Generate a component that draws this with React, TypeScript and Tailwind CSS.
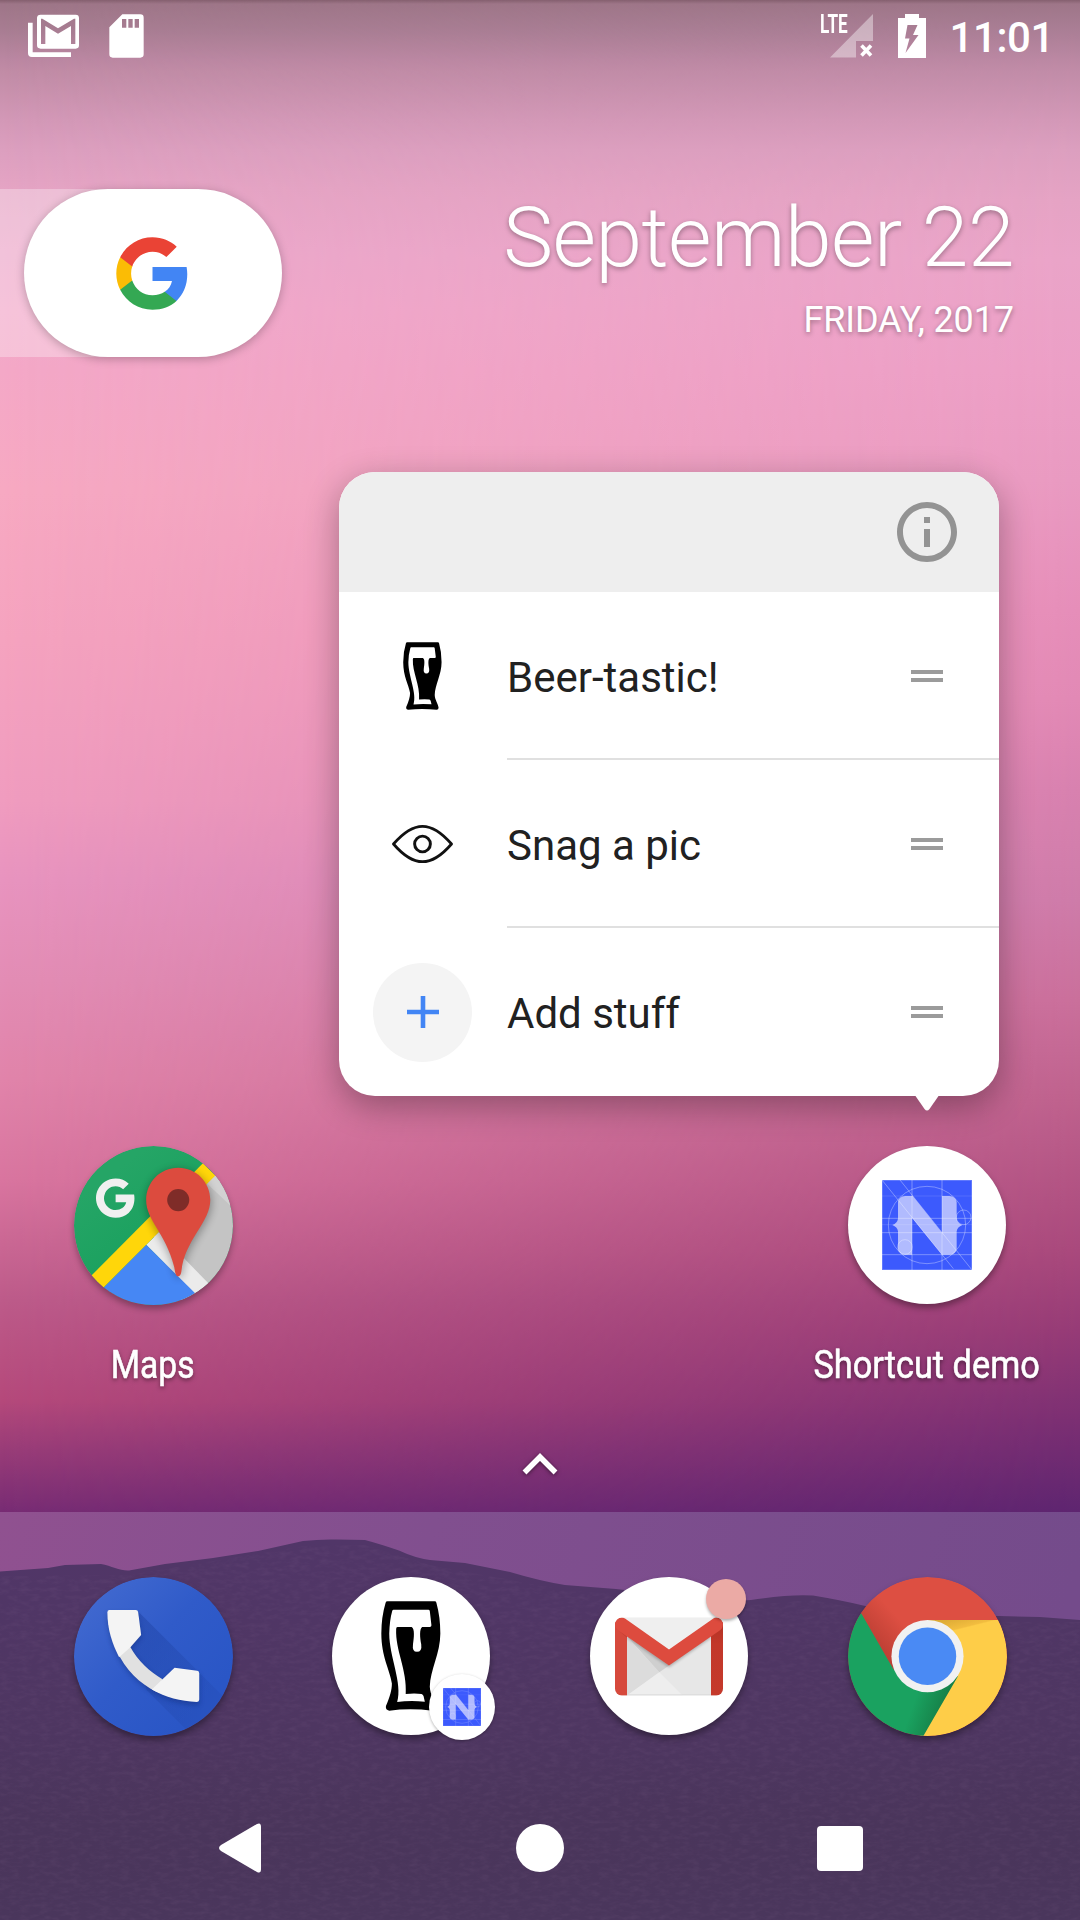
import type { ReactNode } from "react";

type Stop = [number, string];

const LEFT_STOPS: Stop[] = [
  [0, "#85606f"], [4, "#9e7688"], [30, "#a87d92"], [60, "#bb87a2"], [72, "#c18ca6"], [120, "#d398b7"],
  [150, "#dc9fbf"], [189, "#e5a4c4"], [250, "#eca8ca"], [310, "#f2a9ca"], [370, "#f4a8c7"], [490, "#f7a9c2"],
  [640, "#f5a3bf"], [800, "#f09cbf"], [880, "#e894bf"], [980, "#e38db5"], [1080, "#e184aa"],
  [1180, "#d9759f"], [1300, "#bd5b8a"], [1400, "#b5497b"], [1450, "#993c78"], [1512, "#782c74"],
];

const RIGHT_STOPS: Stop[] = [
  [0, "#85606f"], [4, "#9e7688"], [30, "#aa7e95"], [60, "#bb88a3"], [72, "#c18ca8"], [120, "#d398b7"],
  [150, "#dc9fbf"], [200, "#e5a3c4"], [260, "#eaa4c8"], [370, "#ec9fc6"], [480, "#e99ac1"],
  [610, "#e68eb9"], [700, "#e289b5"], [790, "#d881af"], [900, "#ce7ba9"], [1000, "#ca6f9b"],
  [1100, "#be618d"], [1250, "#a9497c"], [1330, "#963b76"], [1420, "#7b2f73"], [1512, "#5e2570"],
];

function Stops({ items }: { items: Stop[] }) {
  return (
    <>
      {items.map(([y, c]) => (
        <stop key={y} offset={y / 1512} stopColor={c} />
      ))}
    </>
  );
}

function Wallpaper() {
  return (
    <svg className="absolute inset-0 h-full w-full" viewBox="0 0 1080 1920" aria-hidden="true">
      <defs>
        <linearGradient id="skyL" x1="0" y1="0" x2="0" y2="1"><Stops items={LEFT_STOPS} /></linearGradient>
        <linearGradient id="skyR" x1="0" y1="0" x2="0" y2="1"><Stops items={RIGHT_STOPS} /></linearGradient>
        <linearGradient id="fade" x1="0" y1="0" x2="1" y2="0">
          <stop offset="0" stopColor="#000" />
          <stop offset="1" stopColor="#fff" />
        </linearGradient>
        <mask id="fadeMask"><rect width="1080" height="1512" fill="url(#fade)" /></mask>
        <linearGradient id="dusk" x1="0" y1="0" x2="1" y2="0.12">
          <stop offset="0" stopColor="#905190" />
          <stop offset="0.4" stopColor="#814f8f" />
          <stop offset="1" stopColor="#744b8b" />
        </linearGradient>
        <linearGradient id="hill" x1="0" y1="0" x2="0" y2="1">
          <stop offset="0" stopColor="#513668" />
          <stop offset="0.5" stopColor="#4e3661" />
          <stop offset="0.75" stopColor="#4a355b" />
          <stop offset="1" stopColor="#4a365c" />
        </linearGradient>
        <filter id="grain" x="0" y="0" width="1" height="1">
          <feTurbulence type="fractalNoise" baseFrequency="0.1 0.25" numOctaves="3" seed="4" />
          <feColorMatrix values="0 0 0 0 0.5  0 0 0 0 0.3  0 0 0 0 0.5  0.9 0 0 0 -0.36" />
          <feComposite in2="SourceGraphic" operator="in" />
        </filter>
      </defs>
      <rect width="1080" height="1512" fill="url(#skyL)" />
      <rect width="1080" height="1512" fill="url(#skyR)" mask="url(#fadeMask)" />
      <rect y="1512" width="1080" height="408" fill="url(#dusk)" />
      <path fill="url(#hill)" d="M0 1571.5L48 1568L65 1565L101 1564C112 1566 120 1571 129 1570.5L165 1564L213 1558L258 1551L303 1541Q320 1539 337 1539.5L365 1540Q380 1544 399 1550.5Q415 1558 430 1560L465 1563L510 1572Q540 1581 565 1585L616 1589Q660 1594 700 1598Q728 1602 751 1600Q790 1594 813 1595.5Q840 1600 861 1605Q900 1615 930 1617L999 1616L1040 1617L1080 1620V1920H0Z" />
      <path filter="url(#grain)" opacity="0.16" d="M0 1576L129 1575L303 1546L365 1545L430 1565L565 1590L751 1605L813 1600L930 1622H1080V1920H0Z" />
    </svg>
  );
}

const G_BLUE = "M22.56 12.25c0-.78-.07-1.53-.2-2.25H12v4.26h5.92c-.26 1.37-1.04 2.53-2.21 3.31v2.77h3.57c2.08-1.92 3.28-4.74 3.28-8.09z";
const G_GREEN = "M12 23c2.97 0 5.46-.98 7.28-2.66l-3.57-2.77c-.98.66-2.23 1.06-3.71 1.06-2.86 0-5.29-1.93-6.16-4.53H2.18v2.84C3.99 20.53 7.7 23 12 23z";
const G_YELLOW = "M5.84 14.09c-.22-.66-.35-1.36-.35-2.09s.13-1.43.35-2.09V7.07H2.18C1.43 8.55 1 10.22 1 12s.43 3.45 1.18 4.93l2.85-2.22.81-.62z";
const G_RED = "M12 5.38c1.62 0 3.06.56 4.21 1.64l3.15-3.15C17.45 2.09 14.97 1 12 1 7.7 1 3.99 3.47 2.18 7.07l3.66 2.84c.87-2.6 3.3-4.53 6.16-4.53z";

function GoogleLogo() {
  return (
    <svg className="mr-[2px] h-[79px] w-[79px]" viewBox="0 0 24 24">
      <path fill="#4285f4" d={G_BLUE} />
      <path fill="#34a853" d={G_GREEN} />
      <path fill="#fbbc05" d={G_YELLOW} />
      <path fill="#ea4335" d={G_RED} />
    </svg>
  );
}

function BeerGlass({ className }: { className: string }) {
  return (
    <svg className={className} viewBox="213 152 182 331" preserveAspectRatio="none">
      <path d="M233 153H376Q380 153 381 157Q393 200 393 250C393 310 362 360 361 410C362 435 378 455 379 472Q379 482 370 482Q300 474 238 482Q226 480 228 468C240 440 246 420 246 400C240 360 214 320 214 250Q214 200 227 157Q228 153 233 153Z" />
      <path fill="#fff" d="M251 178H357Q360 178 361 182L366 225Q366 230 361 230H338C329 236 331 262 335 282Q338 305 322 305Q307 305 310 282C313 262 316 236 306 230H263Q259 230 259 236C256 300 293 360 288 432Q315 429 336 432Q340 433 342 438L346 455Q300 451 262 456C279 400 238 320 238 250Q239 210 247 182Q248 178 251 178Z" />
    </svg>
  );
}

function NativeScriptMark({ className }: { className: string }) {
  return (
    <svg className={className} viewBox="276 180 270 270">
      <rect x="276" y="180" width="270" height="270" fill="#3c5afd" />
      <path fill="#b1bbfe" d="M324 246Q326 230 346 228H368L456 338V228H478Q497 230 500 246V296Q502 309 517 315Q502 321 500 334V386Q498 402 480 404H456L366 293V404H346Q326 402 324 386V334Q322 321 307 315Q322 309 324 296Z" />
      <g fill="none" stroke="#fff" strokeOpacity="0.4" strokeWidth="2.5">
        <path d="M366 180V450M456 180V450M276 295H546M276 338H546M276 404H546M276 180L490 446M330 180L546 450" />
        <path strokeOpacity="0.15" d="M276 228H546M276 314H546" />
        <circle cx="411" cy="315" r="116" />
        <circle cx="345" cy="381" r="22" />
        <circle cx="521" cy="292" r="22" />
        <rect x="277" y="181" width="268" height="268" strokeOpacity="0.25" />
      </g>
    </svg>
  );
}

function MapsIcon() {
  return (
    <svg className="h-[159px] w-[159px] rounded-full shadow-[0_4px_6px_rgba(0,0,0,0.3)]" viewBox="72 78 476 476">
      <defs>
        <clipPath id="mapClip"><circle cx="310" cy="316" r="238" /></clipPath>
        <filter id="pinBlur" x="-30%" y="-30%" width="160%" height="160%"><feGaussianBlur stdDeviation="12" /></filter>
        <linearGradient id="mapGreen" x1="0.2" y1="0.2" x2="0.5" y2="0.6">
          <stop offset="0" stopColor="#25a566" /><stop offset="1" stopColor="#1ba15f" />
        </linearGradient>
      </defs>
      <g clipPath="url(#mapClip)">
        <rect x="72" y="78" width="476" height="476" fill="url(#mapGreen)" />
        <path fill="#c4c4c4" d="M310 350L493 168L560 160V560H400Z" />
        <path fill="#d2d2d2" d="M470 190L493 168L560 160V275Z" />
        <path fill="#ebebeb" d="M288 374L326 336L475 490L434 520Z" />
        <path fill="#4687f4" d="M288 374L163 499L140 560H480L434 518Z" />
        <path fill="#ffd60a" d="M116 474L458 130L495 166L153 509Z" />
        <path fill="#000" opacity="0.32" filter="url(#pinBlur)" d="M384 148C330 148 288 190 288 246C288 310 345 350 370 440Q376 474 390 474Q396 470 400 440C425 350 484 310 484 246C484 190 438 148 384 148Z" />
        <path fill="#dc4b3e" d="M384 143C330 143 288 186 288 240C288 302 345 335 372 440C375 455 375 468 384 468C393 468 393 455 396 435C415 350 480 302 480 240C480 186 438 143 384 143Z" />
        <circle cx="384" cy="240" r="33" fill="#7f2c28" />
        <g transform="translate(132.500 170) scale(5.340)" fill="#f0f0f0">
          <path d={G_BLUE} /><path d={G_GREEN} /><path d={G_YELLOW} /><path d={G_RED} />
        </g>
      </g>
    </svg>
  );
}

function PhoneIcon() {
  return (
    <svg className="h-[159px] w-[159px] rounded-full shadow-[0_4px_6px_rgba(0,0,0,0.35)]" viewBox="72 81 476 476">
      <defs>
        <clipPath id="phoneClip"><circle cx="310" cy="319" r="238" /></clipPath>
        <linearGradient id="phoneBg" x1="0.1" y1="0.15" x2="0.8" y2="0.8">
          <stop offset="0" stopColor="#4068cf" /><stop offset="0.5" stopColor="#305bc9" /><stop offset="1" stopColor="#2a56c6" />
        </linearGradient>
        <linearGradient id="phoneShade" x1="0.1" y1="0.1" x2="0.8" y2="0.8">
          <stop offset="0" stopColor="#1d3f9e" stopOpacity="0.42" /><stop offset="1" stopColor="#1d3f9e" stopOpacity="0.12" />
        </linearGradient>
        <filter id="phoneBlur" x="-20%" y="-20%" width="140%" height="140%"><feGaussianBlur stdDeviation="8" /></filter>
      </defs>
      <g clipPath="url(#phoneClip)">
        <rect x="72" y="81" width="476" height="476" fill="url(#phoneBg)" />
        <path fill="url(#phoneShade)" d="M262 182L450 370L560 480L450 580L290 420L241 291Z" />
        <path fill="#10286e" opacity="0.4" filter="url(#phoneBlur)" d="M172 190H260L273 262L241 298C262 336 300 372 337 394L373 362L447 372V464C300 464 172 345 172 190Z" />
        <path fill="#e1e1e1" d="M200 300L241 291C262 330 300 365 337 387L320 425C270 400 225 360 200 300Z" />
        <path fill="#f4f4f4" d="M178 180H257Q263 180 264 186L273 255L241 291L207 321C185 278 172 235 172 187Q172 180 178 180Z" />
        <path fill="#f4f4f4" d="M373 353L441 362Q447 363 447 370V448Q447 455 440 455C390 454 347 441 305 418L337 387Z" />
      </g>
    </svg>
  );
}

function GmailIcon() {
  return (
    <svg className="h-[79px] w-[108px]" viewBox="135 200 324 236">
      <defs>
        <clipPath id="mailClip"><rect x="135" y="201" width="324" height="234" rx="20" /></clipPath>
        <linearGradient id="mailRight" x1="0" y1="0" x2="0" y2="1">
          <stop offset="0" stopColor="#b23225" /><stop offset="0.3" stopColor="#c2382a" /><stop offset="1" stopColor="#c5392b" />
        </linearGradient>
        <filter id="mailBlur" x="-20%" y="-20%" width="140%" height="150%"><feGaussianBlur stdDeviation="5" /></filter>
      </defs>
      <g clipPath="url(#mailClip)">
        <rect x="135" y="201" width="324" height="234" fill="#e7e7e7" />
        <path fill="#efefef" d="M150 201H445L297 310Z" />
        <path fill="#dcdcdc" d="M171 260L268 365L171 435Z" />
        <path fill="#cfcfcf" d="M171 258L297 345L268 365Z" />
        <path fill="#eeeeee" d="M171 435L268 365L338 435Z" />
        <path fill="#000" opacity="0.25" filter="url(#mailBlur)" d="M171 262L297 350L423 262V250L297 330L171 250Z" />
        <path stroke="#d4d4d4" strokeWidth="3" d="M171 433.500H423" />
        <path fill="#d6493c" d="M135 215H171V436H135Z" />
        <path fill="url(#mailRight)" d="M423 215H460V436H423Z" />
        <path fill="#b53a2e" opacity="0.6" d="M137 232L171 262V250Z" />
        <path fill="#dd4b3e" d="M165 204L297 297L430 204Q438 198 446 202Q459 208 459 222Q457 236 448 241L297 345L146 241Q135 234 135 220Q137 206 150 202Q157 199 165 204Z" />
      </g>
    </svg>
  );
}

function ChromeIcon() {
  return (
    <svg className="h-[159px] w-[159px] rounded-full shadow-[0_4px_6px_rgba(0,0,0,0.35)]" viewBox="54 81 476 476">
      <defs>
        <clipPath id="chromeClip"><circle cx="292" cy="319" r="238" /></clipPath>
        <linearGradient id="cRed" gradientUnits="userSpaceOnUse" x1="120" y1="290" x2="210" y2="210">
          <stop offset="0" stopColor="#b93d32" /><stop offset="1" stopColor="#dd4f42" />
        </linearGradient>
        <linearGradient id="cYellow" gradientUnits="userSpaceOnUse" x1="330" y1="210" x2="350" y2="290">
          <stop offset="0" stopColor="#dba935" /><stop offset="0.45" stopColor="#f2bd3f" /><stop offset="0.5" stopColor="#fecd48" />
        </linearGradient>
        <linearGradient id="cGreen" gradientUnits="userSpaceOnUse" x1="250" y1="460" x2="335" y2="490">
          <stop offset="0" stopColor="#1aa260" /><stop offset="1" stopColor="#168048" />
        </linearGradient>
      </defs>
      <g clipPath="url(#chromeClip)">
        <rect x="54" y="81" width="476" height="476" fill="url(#cRed)" />
        <path fill="#fecd48" d="M292 210H540V560H270L292 450Z" />
        <path fill="url(#cYellow)" d="M292 210H505L370 246H292Z" />
        <path fill="url(#cGreen)" d="M94 190L190 357L292 426L384 377L279 558H40V190Z" />
      </g>
      <circle cx="292" cy="318" r="108" fill="#f1f1f1" />
      <circle cx="292" cy="318" r="86" fill="#4a8af4" />
    </svg>
  );
}

function StatusBar() {
  return (
    <header className="flex h-[72px] items-start pl-[28px] pr-[26px] text-white">
      <svg className="mt-[14px] h-[43px] w-[51px]" viewBox="84 43 153 129">
        <path fill="#fff" d="M84 69H98V158H213V172H96Q84 172 84 160Z" />
        <path fill="#fff" fillRule="evenodd" d="M122 45H227Q237 45 237 55V137Q237 147 227 147H122Q111 147 111 137V55Q111 45 122 45ZM123 57V133H136V79L174 102L213 79V133H226V57H222L174 86L127 57Z" />
      </svg>
      <svg className="ml-[30px] mt-[14px] h-[44px] w-[35px]" viewBox="326 42 105 132">
        <path fill="#fff" fillRule="evenodd" d="M366 43H420Q430 43 430 53V163Q430 173 420 173H337Q327 173 327 163V82ZM365 57V83H378V57ZM384 57V83H397V57ZM403 57V83H416V57Z" />
      </svg>
      <div className="relative ml-auto mt-[14px] h-[44px] w-[55px]">
        <svg className="h-[44px] w-[55px]" viewBox="0 0 55 44">
          <path fill="#fff" fillOpacity="0.4" d="M54 0V27H37V43.500H11Z" />
          <path stroke="#fff" strokeWidth="3.600" d="M42.500 31.500L52 41.500M52 31.500L42.500 41.500" />
        </svg>
        <span className="absolute left-[1px] top-[-5px] origin-left scale-x-[0.66] text-[26px] font-bold leading-[30px]">LTE</span>
      </div>
      <svg className="ml-[24px] mt-[14px] h-[44px] w-[28px]" viewBox="0 0 28 44">
        <path fill="#fff" fillRule="evenodd" d="M7 0H21V4H28V44H0V4H7ZM9.500 11L7 24.500H11.500L7.500 39L20.500 21H15L19.500 11Z" />
      </svg>
      <span className="ml-[23px] mt-[10px] text-[42px] font-medium leading-[56px] tracking-[-0.4px]">11:01</span>
    </header>
  );
}

function DateWidget() {
  return (
    <section className="mt-[117px] flex h-[168px] justify-between">
      <div className="flex w-[150px] bg-white/30 pl-[24px] [clip-path:inset(-20px_-200px_-20px_0)]">
        <div className="flex h-[168px] w-[258px] shrink-0 items-center justify-center rounded-[84px] bg-white shadow-[0_2px_10px_rgba(0,0,0,0.25)]">
          <GoogleLogo />
        </div>
      </div>
      <div className="flex flex-col items-end pr-[66px] text-white [text-shadow:0_2px_5px_rgba(0,0,0,0.35)]">
        <h1 className="whitespace-nowrap text-[84px] font-light leading-[98px] tracking-[-0.5px]">September 22</h1>
        <p className="whitespace-nowrap text-[36px] leading-[66px] tracking-[-0.1px]">FRIDAY, 2017</p>
      </div>
    </section>
  );
}

function ShortcutRow({ icon, label, divider }: { icon: ReactNode; label: string; divider: boolean }) {
  return (
    <li className="flex h-[168px]">
      <div className="flex w-[168px] items-center justify-center pr-[1px]">{icon}</div>
      <div className={`flex flex-1 items-center justify-between pr-[56px] ${divider ? "shadow-[inset_0_-2px_0_#e0e0e0]" : ""}`}>
        <span className="pt-[3px] text-[42px] leading-[50px] text-[#212121]">{label}</span>
        <span className="h-[12px] w-[32px] border-y-4 border-[#9b9b9b]" />
      </div>
    </li>
  );
}

function ShortcutMenu() {
  return (
    <section className="ml-[339px] mt-[115px] w-[660px]">
      <div className="overflow-hidden rounded-[36px] bg-white shadow-[0_10px_34px_rgba(0,0,0,0.32)]">
        <div className="flex h-[120px] items-center justify-end bg-[#eeeeee] pr-[36px]">
          <svg className="h-[72px] w-[72px]" viewBox="0 0 24 24" fill="#939393">
            <path d="M11 17h2v-6h-2v6zm1-15C6.480 2 2 6.480 2 12s4.480 10 10 10 10-4.480 10-10S17.520 2 12 2zm0 18c-4.410 0-8-3.590-8-8s3.590-8 8-8 8 3.590 8 8-3.590 8-8 8zM11 9h2V7h-2v2z" />
          </svg>
        </div>
        <ul>
          <ShortcutRow divider label="Beer-tastic!" icon={<BeerGlass className="h-[68px] w-[39px]" />} />
          <ShortcutRow
            divider
            label="Snag a pic"
            icon={
              <svg className="h-[40px] w-[61px]" viewBox="0 0 62 40" fill="none" stroke="#111">
                <path strokeWidth="2.800" strokeLinejoin="round" d="M1.500 20C11 9 21 2 31 2S51 9 60.500 20C51 31 41 38 31 38S11 31 1.500 20Z" />
                <circle cx="31" cy="20" r="8" strokeWidth="3" />
              </svg>
            }
          />
          <ShortcutRow
            divider={false}
            label="Add stuff"
            icon={
              <div className="flex h-[99px] w-[99px] items-center justify-center rounded-full bg-[#f4f4f4]">
                <svg className="h-[32px] w-[32px]" viewBox="0 0 32 32" stroke="#4285f4" strokeWidth="4.600">
                  <path d="M0 16H32M16 0V32" />
                </svg>
              </div>
            }
          />
        </ul>
      </div>
      <svg className="ml-[576px] block h-[15px] w-[24px]" viewBox="0 0 24 15">
        <path fill="#fff" d="M0.500 0H23.500L14.500 13Q12 16 9.500 13Z" />
      </svg>
    </section>
  );
}

function WhiteDisc({ children }: { children: ReactNode }) {
  return (
    <div className="flex h-[158px] w-[158px] items-center justify-center rounded-full bg-white shadow-[0_4px_6px_rgba(0,0,0,0.35)]">
      {children}
    </div>
  );
}

function HomeApp({ icon, label, scale }: { icon: ReactNode; label: string; scale: string }) {
  return (
    <div className="flex w-[258px] flex-col items-center">
      <div className="h-[158px]">{icon}</div>
      <span className={`mt-[37px] whitespace-nowrap text-[39px] leading-[48px] text-white [-webkit-text-stroke:0.6px_white] [text-shadow:0_2px_5px_rgba(0,0,0,0.5)] ${scale}`}>{label}</span>
    </div>
  );
}

export default function App() {
  return (
    <main className="relative flex h-[1920px] w-[1080px] flex-col overflow-hidden font-['Roboto',sans-serif]">
      <Wallpaper />
      <div className="relative flex flex-1 flex-col">
        <StatusBar />
        <DateWidget />
        <ShortcutMenu />
        <section className="mt-[35px] flex justify-between px-[24px]">
          <HomeApp icon={<MapsIcon />} label="Maps" scale="scale-x-[0.86]" />
          <HomeApp icon={<WhiteDisc><NativeScriptMark className="h-[90px] w-[90px]" /></WhiteDisc>} label="Shortcut demo" scale="scale-x-[0.88]" />
        </section>
        <svg className="mx-auto mt-[59px] h-[30px] w-[40px] drop-shadow-[0_1px_2px_rgba(0,0,0,0.5)]" viewBox="0 0 40 30" fill="none" stroke="#fff" strokeWidth="5.500">
          <path d="M4.500 24.500L20 9L35.500 24.500" />
        </svg>
        <footer className="mt-auto h-[408px]">
          <div className="grid grid-cols-4 justify-items-center px-[24px] pt-[65px]">
            <PhoneIcon />
            <div className="relative">
              <WhiteDisc><BeerGlass className="h-[110px] w-[60px]" /></WhiteDisc>
              <div className="absolute left-[97px] top-[97px] flex h-[66px] w-[66px] items-center justify-center rounded-full bg-white shadow-[0_1px_3px_rgba(0,0,0,0.3)]">
                <NativeScriptMark className="h-[38px] w-[38px]" />
              </div>
            </div>
            <div className="relative">
              <WhiteDisc><GmailIcon /></WhiteDisc>
              <span className="absolute left-[116px] top-[2px] h-[40px] w-[40px] rounded-full bg-[#ebaaa5] shadow-[0_2px_3px_rgba(0,0,0,0.3)]" />
            </div>
            <ChromeIcon />
          </div>
          <nav className="mt-[87px] flex items-center justify-between pl-[218px] pr-[217px]">
            <svg className="h-[50px] w-[44px]" viewBox="0 0 44 50" fill="#fff">
              <path d="M39 1Q43 -1 43 4V46Q43 51 39 49L3 28Q-1 25 3 22Z" />
            </svg>
            <span className="ml-[36px] h-[48px] w-[48px] rounded-full bg-white" />
            <span className="ml-[36px] h-[45px] w-[46px] rounded-[4px] bg-white" />
          </nav>
        </footer>
      </div>
    </main>
  );
}
